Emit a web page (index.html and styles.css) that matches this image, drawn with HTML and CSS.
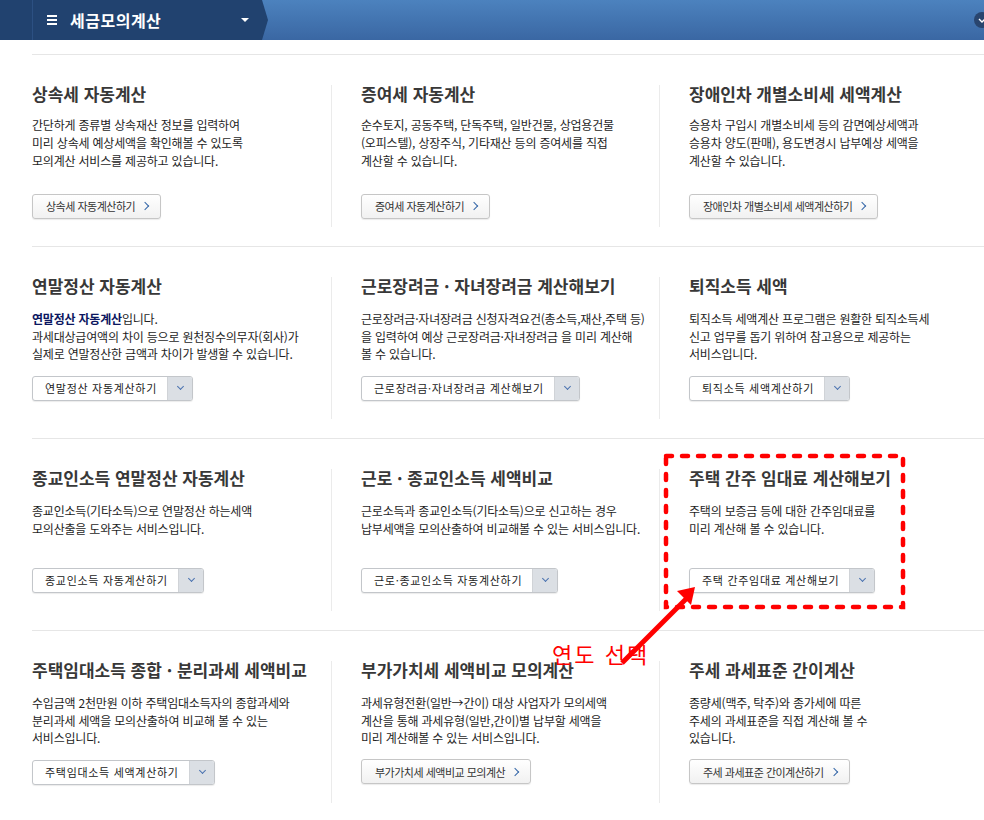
FILE: index.html
```html
<!DOCTYPE html>
<html lang="ko">
<head>
    <meta charset="UTF-8">
    <meta name="viewport" content="width=device-width, initial-scale=1.0">
    <title>세금모의계산</title>
    <link rel="stylesheet" href="styles.css">
</head>
<body>
    <header class="gnb">
        <div class="gnb-nav">
            <div class="gnb-side"></div>
            <div class="gnb-menu">
                <span class="gnb-icon"></span>
                <span class="gnb-title">세금모의계산</span>
                <span class="gnb-caret"></span>
            </div>
        </div>
        <span class="gnb-toggle">
            <svg width="8" height="5" viewBox="0 0 8 5"><polyline points="1,1 4,4 7,1" fill="none" stroke="#fff" stroke-width="1.4"/></svg>
        </span>
    </header>

    <main class="calc-list">
        <section class="calc-row row-first">
            <div class="calc-item">
                <h3>상속세 자동계산</h3>
                <p class="desc">간단하게 종류별 상속재산 정보를 입력하여<br>미리 상속세 예상세액을 확인해볼 수 있도록<br>모의계산 서비스를 제공하고 있습니다.</p>
                <a class="btn-link" href="#">상속세 자동계산하기<i class="chev"></i></a>
            </div>
            <div class="calc-item">
                <h3>증여세 자동계산</h3>
                <p class="desc">순수토지, 공동주택, 단독주택, 일반건물, 상업용건물<br>(오피스텔), 상장주식, 기타재산 등의 증여세를 직접<br>계산할 수 있습니다.</p>
                <a class="btn-link" href="#">증여세 자동계산하기<i class="chev"></i></a>
            </div>
            <div class="calc-item">
                <h3>장애인차 개별소비세 세액계산</h3>
                <p class="desc">승용차 구입시 개별소비세 등의 감면예상세액과<br>승용차 양도(판매), 용도변경시 납부예상 세액을<br>계산할 수 있습니다.</p>
                <a class="btn-link" href="#">장애인차 개별소비세 세액계산하기<i class="chev"></i></a>
            </div>
        </section>

        <section class="calc-row">
            <div class="calc-item">
                <h3>연말정산 자동계산</h3>
                <p class="desc"><b>연말정산 자동계산</b>입니다.<br>과세대상급여액의 차이 등으로 원천징수의무자(회사)가<br>실제로 연말정산한 금액과 차이가 발생할 수 있습니다.</p>
                <div class="btn-select"><span class="label">연말정산 자동계산하기</span><span class="arrow"></span></div>
            </div>
            <div class="calc-item">
                <h3>근로장려금 · 자녀장려금 계산해보기</h3>
                <p class="desc">근로장려금·자녀장려금 신청자격요건(총소득,재산,주택 등)<br>을 입력하여 예상 근로장려금·자녀장려금 을 미리 계산해<br>볼 수 있습니다.</p>
                <div class="btn-select"><span class="label">근로장려금·자녀장려금 계산해보기</span><span class="arrow"></span></div>
            </div>
            <div class="calc-item">
                <h3>퇴직소득 세액</h3>
                <p class="desc">퇴직소득 세액계산 프로그램은 원활한 퇴직소득세<br>신고 업무를 돕기 위하여 참고용으로 제공하는<br>서비스입니다.</p>
                <div class="btn-select"><span class="label">퇴직소득 세액계산하기</span><span class="arrow"></span></div>
            </div>
        </section>

        <section class="calc-row">
            <div class="calc-item">
                <h3>종교인소득 연말정산 자동계산</h3>
                <p class="desc">종교인소득(기타소득)으로 연말정산 하는세액<br>모의산출을 도와주는 서비스입니다.</p>
                <div class="btn-select"><span class="label">종교인소득 자동계산하기</span><span class="arrow"></span></div>
            </div>
            <div class="calc-item">
                <h3>근로 · 종교인소득 세액비교</h3>
                <p class="desc">근로소득과 종교인소득(기타소득)으로 신고하는 경우<br>납부세액을 모의산출하여 비교해볼 수 있는 서비스입니다.</p>
                <div class="btn-select"><span class="label">근로·종교인소득 자동계산하기</span><span class="arrow"></span></div>
            </div>
            <div class="calc-item">
                <h3>주택 간주 임대료 계산해보기</h3>
                <p class="desc">주택의 보증금 등에 대한 간주임대료를<br>미리 계산해 볼 수 있습니다.</p>
                <div class="btn-select"><span class="label">주택 간주임대료 계산해보기</span><span class="arrow"></span></div>
            </div>
        </section>

        <section class="calc-row">
            <div class="calc-item">
                <h3>주택임대소득 종합 · 분리과세 세액비교</h3>
                <p class="desc">수입금액 2천만원 이하 주택임대소득자의 종합과세와<br>분리과세 세액을 모의산출하여 비교해 볼 수 있는<br>서비스입니다.</p>
                <div class="btn-select"><span class="label">주택임대소득 세액계산하기</span><span class="arrow"></span></div>
            </div>
            <div class="calc-item">
                <h3>부가가치세 세액비교 모의계산</h3>
                <p class="desc">과세유형전환(일반→간이) 대상 사업자가 모의세액<br>계산을 통해 과세유형(일반,간이)별 납부할 세액을<br>미리 계산해볼 수 있는 서비스입니다.</p>
                <a class="btn-link" href="#">부가가치세 세액비교 모의계산<i class="chev"></i></a>
            </div>
            <div class="calc-item">
                <h3>주세 과세표준 간이계산</h3>
                <p class="desc">종량세(맥주, 탁주)와 종가세에 따른<br>주세의 과세표준을 직접 계산해 볼 수<br>있습니다.</p>
                <a class="btn-link" href="#">주세 과세표준 간이계산하기<i class="chev"></i></a>
            </div>
        </section>
    </main>

    <!-- red annotation drawn over the page -->
    <svg class="mark-box" width="250" height="164" viewBox="0 0 250 164">
        <rect x="6" y="6" width="237" height="151" fill="none" stroke="#ff0000" stroke-width="4.5" stroke-dasharray="6 10" stroke-linecap="round"/>
    </svg>
    <svg class="mark-arrow" width="110" height="110" viewBox="0 0 110 110">
        <line x1="22" y1="93" x2="86" y2="29" stroke="#ff0000" stroke-width="5"/>
        <polygon points="95,17 77,21 91,35" fill="#ff0000"/>
    </svg>
    <span class="mark-text">연도 선택</span>
</body>
</html>
```

FILE: styles.css
```css
body {
    margin: 0;
    font-family: "Noto Sans CJK KR", "Noto Sans", sans-serif;
    background-color: #fff;
    overflow: hidden;
}

/* top bar */
.gnb {
    display: flex;
    align-items: center;
    height: 40px;
    background: linear-gradient(#4c82be, #3a67a3);
    overflow: hidden;
}
.gnb-nav {
    display: flex;
    width: 268px;
    height: 40px;
    background-color: #21426f;
    clip-path: polygon(0 0, 262px 0, 268px 20px, 262px 40px, 0 40px);
}
.gnb-side {
    width: 32px;
    border-right: 1px solid #2c5082;
}
.gnb-menu {
    flex: 1;
    display: flex;
    align-items: center;
    padding-left: 14px;
    color: #fff;
}
.gnb-icon {
    width: 10px;
    height: 2px;
    background-color: #fff;
    box-shadow: 0 -4px 0 #fff, 0 4px 0 #fff;
    margin-right: 13px;
}
.gnb-title {
    font-size: 16px;
    font-weight: bold;
    letter-spacing: 0.5px;
}
.gnb-caret {
    margin-left: auto;
    margin-right: 19px;
    border-left: 4px solid transparent;
    border-right: 4px solid transparent;
    border-top: 4px solid #fff;
}
.gnb-toggle {
    display: flex;
    align-items: center;
    justify-content: center;
    margin-left: auto;
    margin-right: -6px;
    width: 16px;
    height: 16px;
    border-radius: 50%;
    background-color: #29456e;
}

/* calculator list */
.calc-list {
    margin: 14px 0 0 32px;
}
.calc-row {
    display: grid;
    grid-template-columns: 299px 328px 1fr;
    height: 192px;
    box-sizing: border-box;
    border-top: 1px solid #e6e6e6;
    padding-top: 30px;
}
.calc-item {
    height: 142px;
}
.calc-item + .calc-item {
    border-left: 1px solid #ebebeb;
    padding-left: 29px;
}
.calc-item h3 {
    margin: 0;
    font-size: 17px;
    line-height: 17px;
    font-weight: bold;
    color: #383838;
    white-space: nowrap;
}
.desc {
    margin: 16px 0 11px;
    min-height: 52.5px;
    font-size: 12px;
    line-height: 17.5px;
    color: #1e1e1e;
    letter-spacing: -0.2px;
    white-space: nowrap;
}
.desc b {
    color: #0b1660;
}
.row-first .desc {
    margin: 13.5px 0 22.5px;
    line-height: 18px;
}

/* buttons */
.btn-link {
    display: inline-flex;
    align-items: center;
    gap: 7px;
    height: 25px;
    box-sizing: border-box;
    padding: 0 10px 0 13px;
    border: 1px solid #c6c6c6;
    border-radius: 3px;
    background: linear-gradient(#fff, #f1f1f1);
    box-shadow: 0 1px 1px rgba(0, 0, 0, 0.08);
    font-size: 11px;
    letter-spacing: -0.5px;
    color: #333;
    text-decoration: none;
}
.chev {
    width: 5px;
    height: 5px;
    border-top: 1.5px solid #3466a8;
    border-right: 1.5px solid #3466a8;
    transform: rotate(45deg);
    margin-right: 2px;
}
.btn-select {
    display: inline-flex;
    height: 25px;
    box-sizing: border-box;
    border: 1px solid #c3c6ca;
    border-radius: 3px;
    overflow: hidden;
    background-color: #fff;
    box-shadow: 0 1px 1px rgba(0, 0, 0, 0.08);
}
.btn-select .label {
    padding: 0 10px 0 12px;
    line-height: 23px;
    font-size: 11px;
    letter-spacing: 0.7px;
    color: #222;
    white-space: nowrap;
}
.btn-select .arrow {
    position: relative;
    width: 24px;
    background-color: #dbdfe4;
    border-left: 1px solid #d0d3d7;
}
.btn-select .arrow::after {
    content: "";
    position: absolute;
    left: 10px;
    top: 7px;
    width: 4px;
    height: 4px;
    border-right: 1.5px solid #4a73b0;
    border-bottom: 1.5px solid #4a73b0;
    transform: rotate(45deg);
}

/* annotation */
.mark-box {
    position: absolute;
    left: 660px;
    top: 450px;
}
.mark-arrow {
    position: absolute;
    left: 600px;
    top: 570px;
}
.mark-text {
    position: absolute;
    left: 552px;
    top: 642px;
    font-size: 22px;
    line-height: 22px;
    letter-spacing: 2px;
    color: #ff0000;
}
```
